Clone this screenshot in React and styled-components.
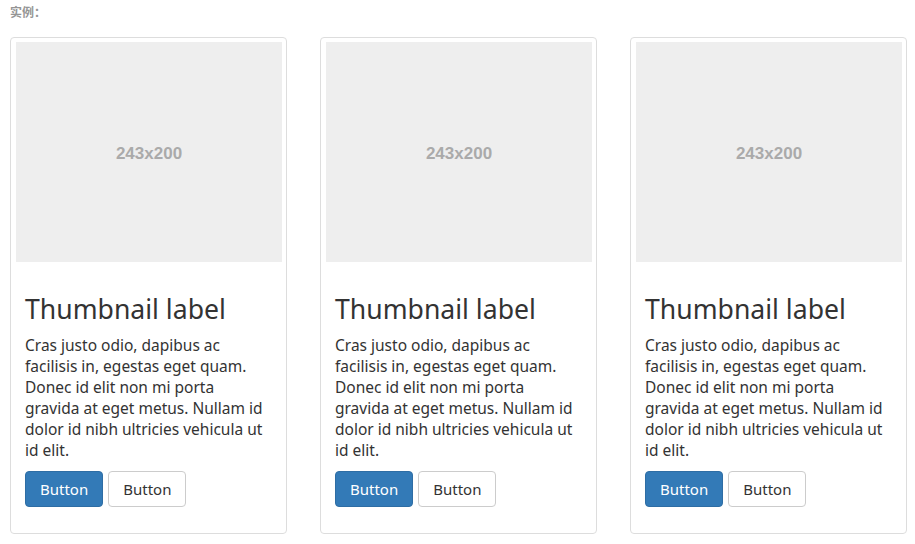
import styled, { createGlobalStyle } from "styled-components";

const GlobalStyle = createGlobalStyle`
  body {
    margin: 0;
    background: #fff;
    font-family: "Noto Sans", "Noto Sans CJK SC", sans-serif;
    color: #333;
  }
`;

const Page = styled.div`
  padding: 4px 10px 0 10px;
`;

const Label = styled.div`
  font-size: 12px;
  font-weight: bold;
  color: #959595;
  line-height: 18px;
  margin-bottom: 15px;
`;

const Row = styled.div`
  display: flex;
  gap: 33px;
`;

const Thumbnail = styled.div`
  width: 277px;
  box-sizing: border-box;
  border: 1px solid #ddd;
  border-radius: 4px;
  padding: 4px;
  background: #fff;
`;

const Placeholder = styled.div`
  margin-left: 1px;
  width: 266px;
  height: 220px;
  box-sizing: border-box;
  padding-top: 3px;
  background: #eee;
  display: flex;
  align-items: center;
  justify-content: center;
  font-family: "Liberation Sans", Arial, sans-serif;
  font-weight: bold;
  font-size: 17px;
  color: #aaa;
`;

const Caption = styled.div`
  padding: 9px 6px 9px 10px;
`;

const Title = styled.h3`
  font-size: 26.6px;
  font-weight: 400;
  line-height: 30px;
  margin: 23px 0 11px;
  color: #333;
`;

const Text = styled.p`
  font-size: 15.5px;
  line-height: 21px;
  margin: 0 0 10px;
`;

const Actions = styled.p`
  display: flex;
  gap: 5px;
  margin: 0 0 13px;
`;

const Button = styled.a`
  display: inline-block;
  box-sizing: border-box;
  height: 36px;
  padding: 0 14px;
  line-height: 34px;
  font-size: 15px;
  border-radius: 4px;
  border: 1px solid ${(p) => (p.$primary ? "#2e6da4" : "#ccc")};
  background: ${(p) => (p.$primary ? "#337ab7" : "#fff")};
  color: ${(p) => (p.$primary ? "#fff" : "#333")};
  cursor: pointer;
`;

const lines = [
  "Cras justo odio, dapibus ac",
  "facilisis in, egestas eget quam.",
  "Donec id elit non mi porta",
  "gravida at eget metus. Nullam id",
  "dolor id nibh ultricies vehicula ut",
  "id elit.",
];

function Card() {
  return (
    <Thumbnail>
      <Placeholder>243x200</Placeholder>
      <Caption>
        <Title>Thumbnail label</Title>
        <Text>
          {lines.map((line, i) => (
            <span key={i}>
              {line}
              {i < lines.length - 1 && <br />}
            </span>
          ))}
        </Text>
        <Actions>
          <Button $primary>Button</Button>
          <Button>Button</Button>
        </Actions>
      </Caption>
    </Thumbnail>
  );
}

export default function App() {
  return (
    <Page>
      <GlobalStyle />
      <Label>实例：</Label>
      <Row>
        <Card />
        <Card />
        <Card />
      </Row>
    </Page>
  );
}
